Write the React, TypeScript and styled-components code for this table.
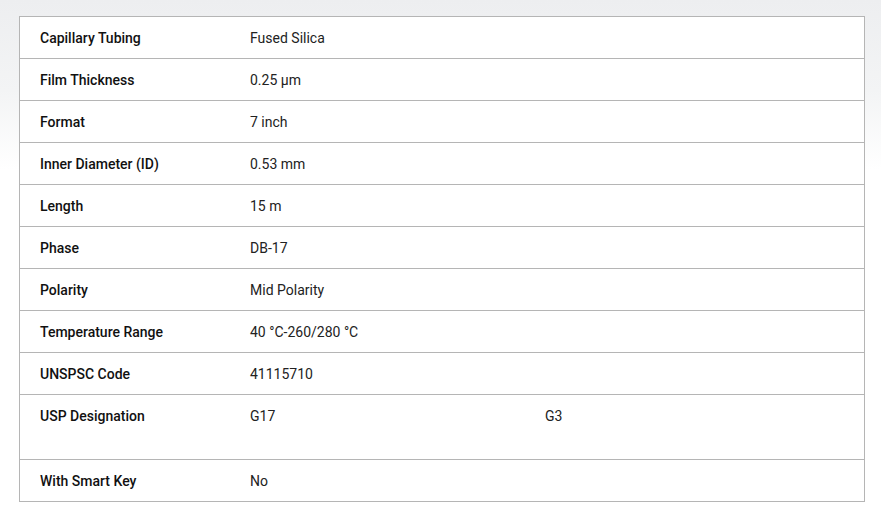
import React from 'react'
import styled, { createGlobalStyle } from 'styled-components'

interface Spec {
  label: string
  values: string[]
  tall?: boolean
}

const specs: Spec[] = [
  { label: 'Capillary Tubing', values: ['Fused Silica'] },
  { label: 'Film Thickness', values: ['0.25 µm'] },
  { label: 'Format', values: ['7 inch'] },
  { label: 'Inner Diameter (ID)', values: ['0.53 mm'] },
  { label: 'Length', values: ['15 m'] },
  { label: 'Phase', values: ['DB-17'] },
  { label: 'Polarity', values: ['Mid Polarity'] },
  { label: 'Temperature Range', values: ['40 °C-260/280 °C'] },
  { label: 'UNSPSC Code', values: ['41115710'] },
  { label: 'USP Designation', values: ['G17', 'G3'], tall: true },
  { label: 'With Smart Key', values: ['No'] },
]

const App = () => (
  <>
    <GlobalStyle />
    <Page>
      <SpecTable>
        {specs.map(spec => (
          <Row key={spec.label} $tall={spec.tall}>
            <Label>{spec.label}</Label>
            <Values>
              {spec.values.map(value => (
                <Value key={value}>{value}</Value>
              ))}
            </Values>
          </Row>
        ))}
      </SpecTable>
    </Page>
  </>
)

export default App

const GlobalStyle = createGlobalStyle`
  html, body {
    margin: 0;
    padding: 0;
  }

  body {
    font-family: Roboto, 'Liberation Sans', sans-serif;
    color: #222;
    background: #fff;
  }
`

const Page = styled.div`
  min-height: 521px;
  padding: 16px 16px 0 19px;
  box-sizing: border-box;
  background: linear-gradient(to bottom, #edeef0 0px, #f3f4f5 90px, #ffffff 170px);
`

const SpecTable = styled.div`
  width: 846px;
  border: 1px solid #b5b5b5;
  background: #fff;
  box-sizing: border-box;
`

const Row = styled.div<{ $tall?: boolean }>`
  display: grid;
  grid-template-columns: 210px 1fr;
  height: ${p => (p.$tall ? 65 : 42)}px;
  padding-top: 13px;
  box-sizing: border-box;
  border-top: 1px solid #b5b5b5;
  font-size: 14px;
  line-height: 17px;

  &:first-child {
    border-top: none;
    height: 41px;
    padding-top: 13px;
  }
`

const Label = styled.div`
  padding-left: 20px;
  font-weight: 500;
  color: #111;
`

const Values = styled.div`
  display: grid;
  grid-template-columns: 295px 1fr;
  padding-left: 20px;
`

const Value = styled.div`
  font-weight: 400;
`
